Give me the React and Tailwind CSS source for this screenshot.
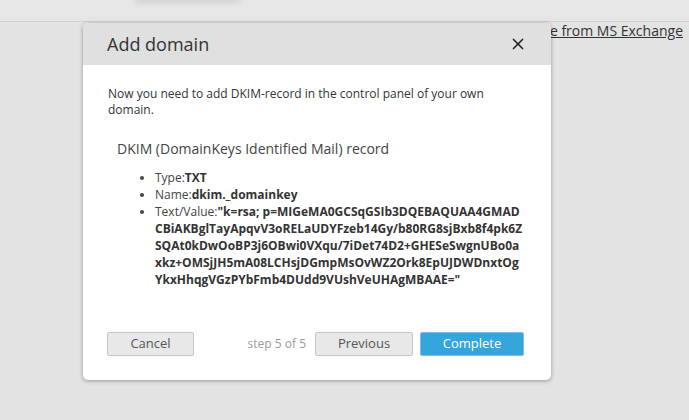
import { X } from "lucide-react";

const dkimLines = [
  "\"k=rsa; p=MIGeMA0GCSqGSIb3DQEBAQUAA4GMAD",
  "CBiAKBglTayApqvV3oRELaUDYFzeb14Gy/b80RG8sjBxb8f4pk6Z",
  "SQAt0kDwOoBP3j6OBwi0VXqu/7iDet74D2+GHESeSwgnUBo0a",
  "xkz+OMSjJH5mA08LCHsjDGmpMsOvWZ2Ork8EpUJDWDnxtOg",
  "YkxHhqgVGzPYbFmb4DUdd9VUshVeUHAgMBAAE=\"",
];

export default function App() {
  return (
    <div
      className="relative w-[689px] h-[420px] overflow-hidden bg-[#e3e3e3] text-[#333]"
      style={{ fontFamily: '"Open Sans", "Liberation Sans", sans-serif' }}
    >
      {/* BACKGROUND PAGE */}
      <div className="h-[22px] bg-[#e6e6e6] border-b border-[#d2d2d2] flex">
        <div className="ml-[135px] w-[105px] h-[3px] -mt-[3px] rounded-full bg-[#bdbdbd] shadow-[0_1px_6px_rgba(0,0,0,0.2)]" />
      </div>
      <div className="flex justify-end pr-[6px]">
        <a className="text-[14px] leading-[18px] text-[#333] underline">
          Instructions for data move from MS Exchange
        </a>
      </div>

      {/* MODAL */}
      <div className="absolute left-[83px] top-[23px] w-[468px] h-[357px] bg-white rounded-[5px] shadow-[0_1px_4px_rgba(0,0,0,0.35)] flex flex-col overflow-hidden">
        {/* HEADER */}
        <div className="h-[42px] bg-[#e0e0e0] flex items-center justify-between pl-[24px] pr-[24px]">
          <h2 className="text-[18px] text-[#333]">Add domain</h2>
          <X size={18} strokeWidth={2.2} className="text-[#222]" />
        </div>

        {/* BODY */}
        <div className="flex-1 pl-[25px] pr-[24px] pt-[21px]">
          <p className="text-[12px] leading-[16px] text-[#333]">
            Now you need to add DKIM-record in the control panel of your own
            domain.
          </p>

          <h3 className="text-[14px] leading-[20px] text-[#444] mt-[21px] ml-[9px]">
            DKIM (DomainKeys Identified Mail) record
          </h3>

          <ul className="list-disc mt-[10px] ml-[47px] w-[385px] text-[12px] leading-[17px] text-[#444]">
            <li>
              Type:<b className="font-bold text-[#333]">TXT</b>
            </li>
            <li>
              Name:<b className="font-bold text-[#333]">dkim._domainkey</b>
            </li>
            <li className="whitespace-nowrap">
              Text/Value:
              <b className="font-bold text-[#333]">
                {dkimLines.map((line, i) => (
                  <span key={i}>
                    {i > 0 && <br />}
                    {line}
                  </span>
                ))}
              </b>
            </li>
          </ul>
        </div>

        {/* FOOTER */}
        <div className="flex items-center pl-[24px] pr-[27px] pb-[24px]">
          <button className="w-[87px] h-[24px] bg-[#e8e8e8] border border-[#c6c6c6] rounded-[2px] text-[13px] text-[#555]">
            Cancel
          </button>
          <span className="ml-auto text-[12px] text-[#9a9a9a] mr-[9px]">
            step 5 of 5
          </span>
          <button className="w-[98px] h-[24px] bg-[#e8e8e8] border border-[#c6c6c6] rounded-[2px] text-[13px] text-[#555]">
            Previous
          </button>
          <button className="ml-[7px] w-[104px] h-[24px] bg-[#34a6dc] border border-[#7fb8f5] rounded-[2px] text-[13px] text-white">
            Complete
          </button>
        </div>
      </div>
    </div>
  );
}
